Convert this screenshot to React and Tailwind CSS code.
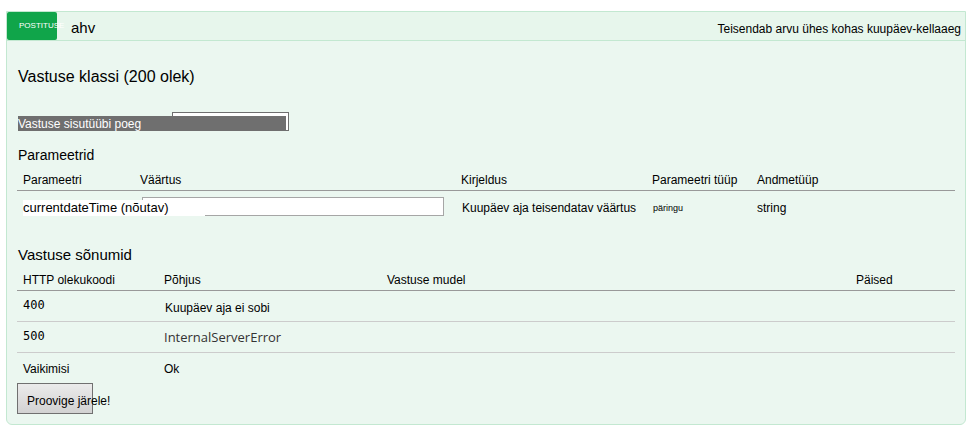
const parameterHeads = ['Parameetri', 'Väärtus', 'Kirjeldus', 'Parameetri tüüp', 'Andmetüüp'];
const responseHeads = ['HTTP olekukoodi', 'Põhjus', 'Vastuse mudel', 'Päised'];

function HeadRow({ labels }) {
  return (
    <thead>
      <tr>
        {labels.map((label) => (
          <th
            key={label}
            scope="col"
            className="border-b border-[#999999] pt-[7px] pb-0.5 pl-1.5 text-left font-normal whitespace-nowrap"
          >
            {label}
          </th>
        ))}
      </tr>
    </thead>
  );
}

function Operation() {
  return (
    <section className="rounded-b-md border border-[#c3e8d1] bg-[#ebf7f0]">
      <header className="flex h-[29px] items-center border-b border-[#c3e8d1] bg-[#e7f6ec]">
        <a
          href="#ahv"
          className="h-7 w-[50px] shrink-0 rounded-xs bg-[#10a54a] pl-3 text-[8px] leading-7 whitespace-nowrap text-white"
        >
          POSTITUSE
        </a>
        <a href="#ahv" className="ml-3.5 pt-1 text-[15px] leading-5">
          ahv
        </a>
        <p className="ml-auto pt-1.5 pr-1">Teisendab arvu ühes kohas kuupäev-kellaaeg</p>
      </header>

      <div className="px-2.5 pt-6 pb-2.5">
        <h4 className="pl-px text-base leading-6">Vastuse klassi (200 olek)</h4>

        <div className="relative mt-[23px] flex pl-[155px]">
          <select
            id="content-type"
            className="h-[19px] w-[117px] appearance-none border border-[#6f6f6f] bg-white"
          />
          <label
            htmlFor="content-type"
            className="absolute bottom-0 left-px h-[15px] w-[268px] bg-[#6f6f6f] leading-4 text-white"
          >
            Vastuse sisutüübi poeg
          </label>
        </div>

        <h4 className="mt-3.5 pl-px text-[14px] leading-5">Parameetrid</h4>
        <table className="w-full table-fixed border-separate border-spacing-0">
          <colgroup>
            <col className="w-[117px]" />
            <col />
            <col className="w-[191px]" />
            <col className="w-[105px]" />
            <col className="w-[204px]" />
          </colgroup>
          <HeadRow labels={parameterHeads} />
          <tbody>
            <tr>
              <td className="relative z-10 pt-1.5 pl-1.5">
                <label
                  htmlFor="current-date-time"
                  className="absolute bottom-0 left-1.5 h-4 w-[182px] bg-white text-[13px] leading-4"
                >
                  currentdateTime (nõutav)
                </label>
              </td>
              <td className="pt-1.5 pr-[11px] pl-2">
                <input
                  id="current-date-time"
                  type="text"
                  className="block h-[19px] w-full border border-[#a6a6a6] bg-white"
                />
              </td>
              <td className="pt-2 pl-[7px] whitespace-nowrap">Kuupäev aja teisendatav väärtus</td>
              <td className="pt-2 pl-[7px] text-[9px]">päringu</td>
              <td className="pt-2 pl-1.5">string</td>
            </tr>
          </tbody>
        </table>

        <h4 className="mt-[29px] pl-px text-[15px] leading-5">Vastuse sõnumid</h4>
        <table className="w-full table-fixed border-separate border-spacing-0">
          <colgroup>
            <col className="w-[141px]" />
            <col className="w-[223px]" />
            <col />
            <col className="w-[105px]" />
          </colgroup>
          <HeadRow labels={responseHeads} />
          <tbody>
            <tr className="h-[31px]">
              <td className="border-b border-[#cccccc] pb-0.5 pl-1.5 font-['DejaVu_Sans_Mono',monospace]">400</td>
              <td className="border-b border-[#cccccc] pt-1 pl-[7px]">Kuupäev aja ei sobi</td>
              <td className="border-b border-[#cccccc]" />
              <td className="border-b border-[#cccccc]" />
            </tr>
            <tr className="h-[31px]">
              <td className="border-b border-[#cccccc] pb-0.5 pl-1.5 font-['DejaVu_Sans_Mono',monospace]">500</td>
              <td className="border-b border-[#cccccc] pl-1.5 font-['Open_Sans',sans-serif] text-[13px] leading-4 text-[#333333]">
                InternalServerError
              </td>
              <td className="border-b border-[#cccccc]" />
              <td className="border-b border-[#cccccc]" />
            </tr>
            <tr className="h-[30px]">
              <td className="pt-0.5 pl-1.5">Vaikimisi</td>
              <td className="pt-0.5 pl-1.5">Ok</td>
              <td />
              <td />
            </tr>
          </tbody>
        </table>

        <button
          type="button"
          className="block h-[31px] w-[76px] border border-[#707070] bg-linear-to-b from-[#ebebeb] to-[#d2d2d2] pt-1 pl-[9px] text-left whitespace-nowrap"
        >
          Proovige järele!
        </button>
      </div>
    </section>
  );
}

export default function App() {
  return (
    <main className="min-h-screen bg-white pt-[11px] pr-2.5 pl-1.5 font-['Liberation_Sans',Arial,sans-serif] text-xs text-black">
      <Operation />
    </main>
  );
}
